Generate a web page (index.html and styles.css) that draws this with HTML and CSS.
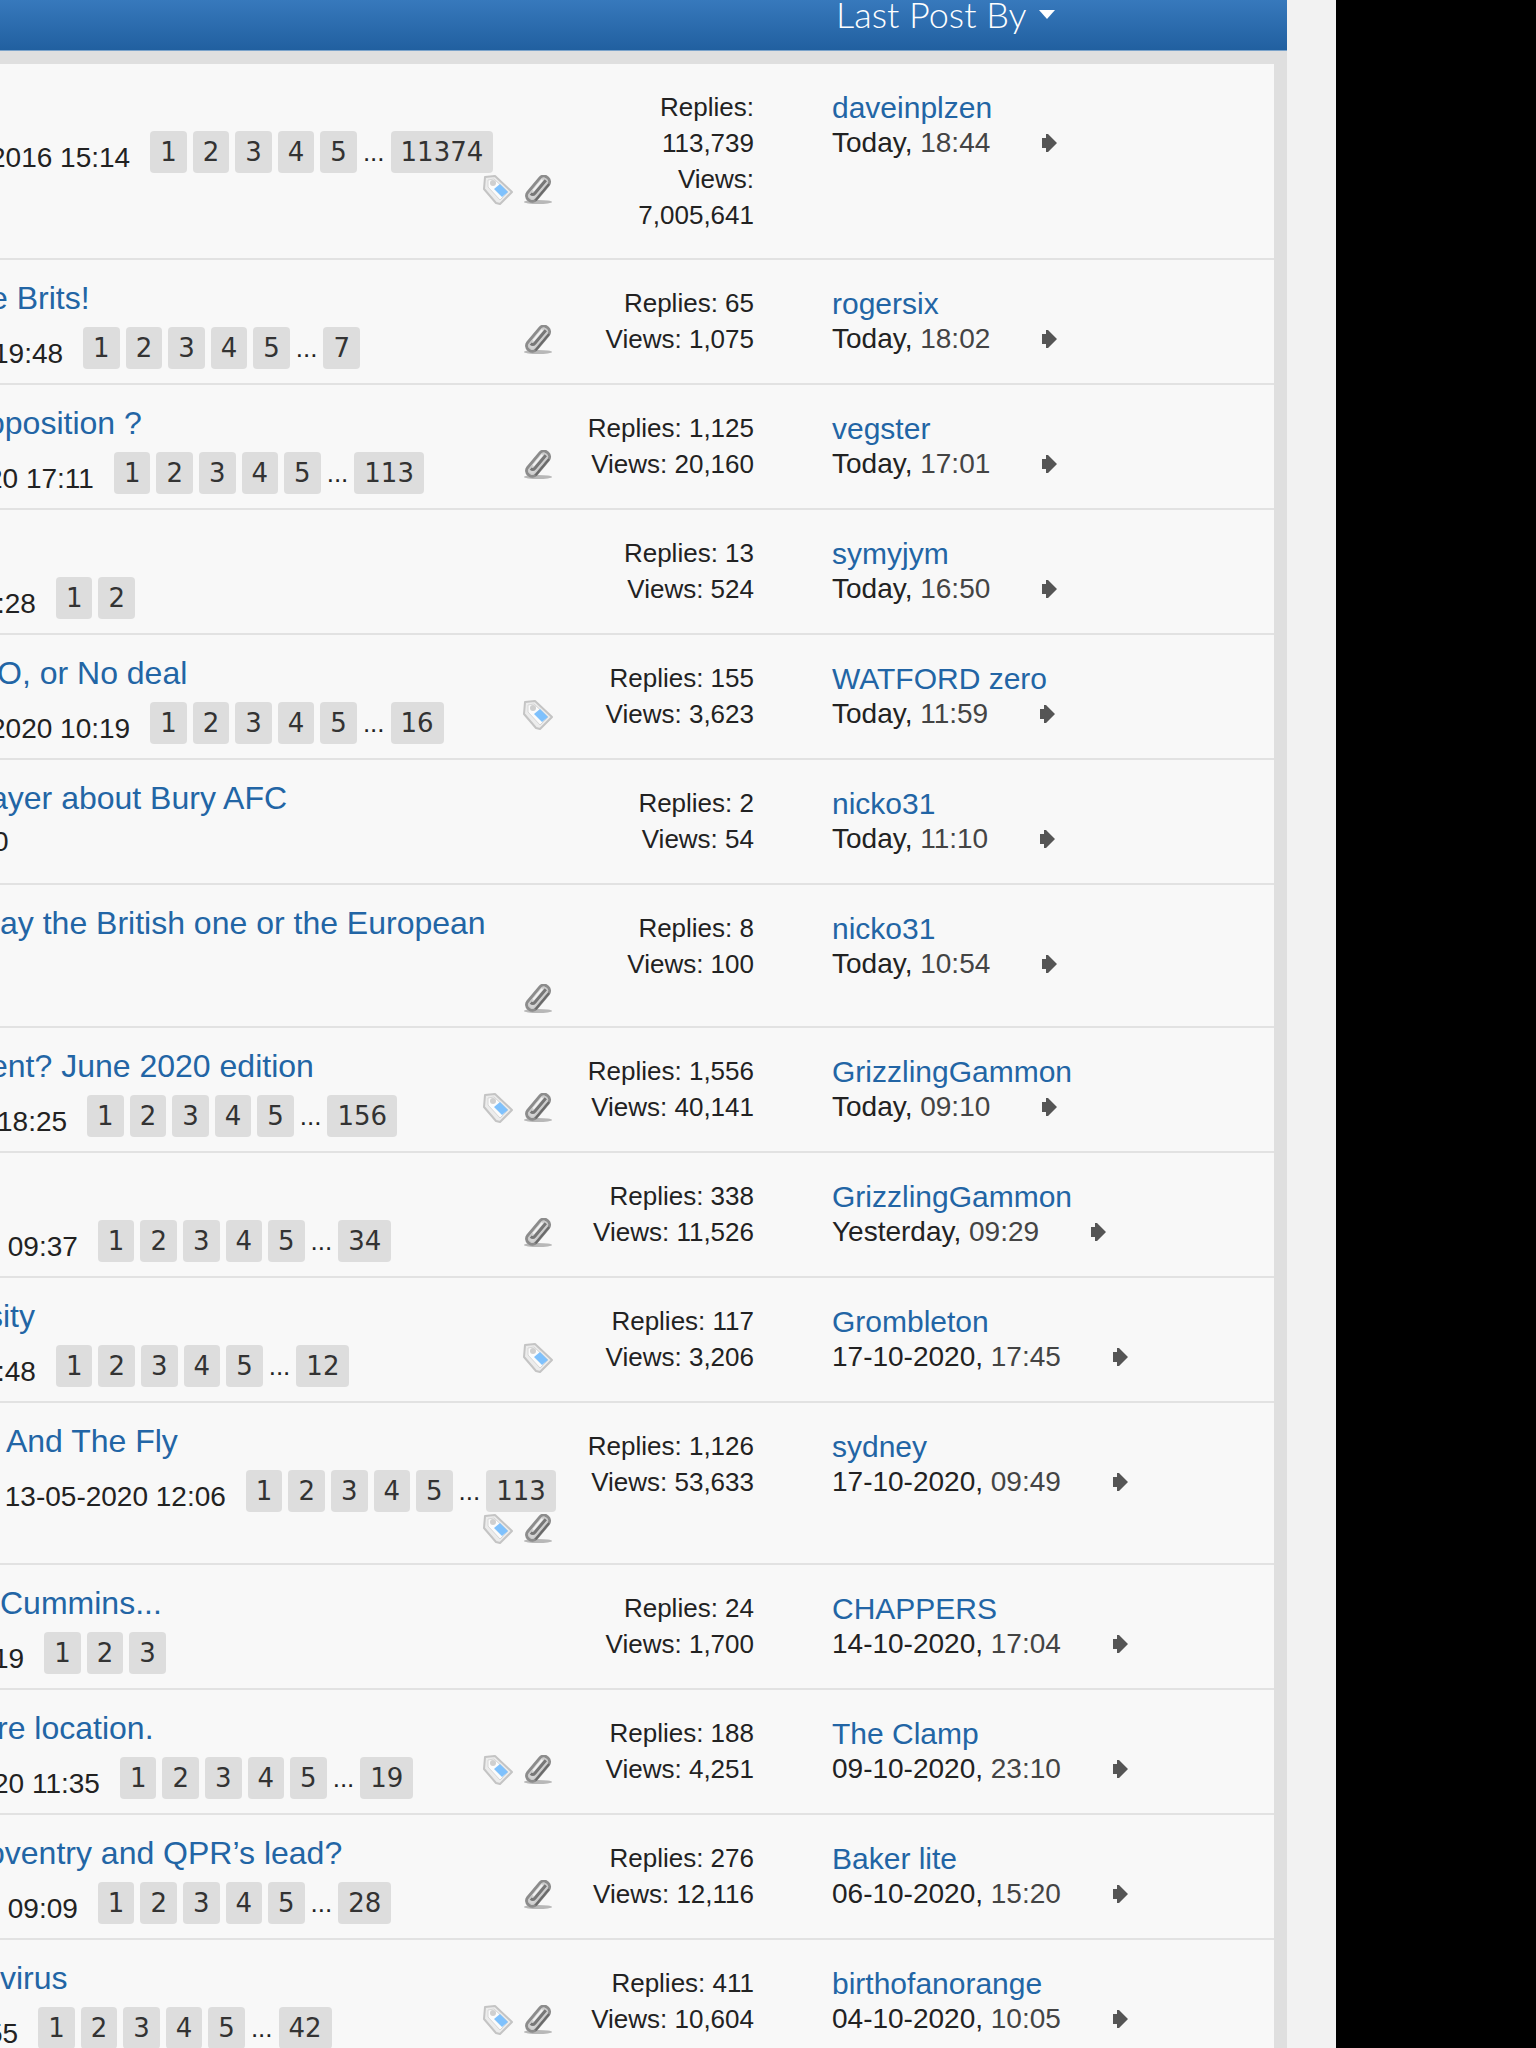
FILE: index.html
```
<!DOCTYPE html>
<html lang="en">
<head>
    <meta charset="UTF-8">
    <meta name="viewport" content="width=device-width, initial-scale=1.0">
    <title>Forum threads</title>
    <link rel="stylesheet" href="styles.css">
</head>
<body>
    <svg class="sprite" aria-hidden="true">
        <symbol id="icon-tag" viewBox="0 0 32 30">
            <path d="M4 2 L14 1 L31 17 L19 29 L15 28 L3 14 Z" fill="#ececec" stroke="#c4c4c4" stroke-width="2" stroke-linejoin="round"/>
            <path d="M7 5 L13 4 L27 17 L19 25 L7 12 Z" fill="#fbfbfb" stroke="#d6d6d6" stroke-width="1"/>
            <circle cx="12" cy="8" r="3" fill="#cfcfcf"/>
            <path d="M19 9 L27 17 L21 22 L13 14 Z" fill="#7fc1fc"/>
        </symbol>
        <symbol id="icon-clip" viewBox="0 0 32 30">
            <ellipse cx="17" cy="27" rx="14" ry="2" fill="#b8b8b8"/>
            <g transform="rotate(-50 17 13)" fill="none">
                <rect x="2" y="8" width="29" height="11" rx="5" fill="#d4d4d4" stroke="#8c8c8c" stroke-width="3"/>
                <rect x="4" y="10" width="25" height="7" rx="3" stroke="#c9c9c9" stroke-width="1"/>
                <path d="M28 14 H11 Q8 14 8 11" stroke="#777" stroke-width="3"/>
                <path d="M26 11 H12" stroke="#f2f2f2" stroke-width="2"/>
                <path d="M6 19 H27" stroke="#6a6a6a" stroke-width="2"/>
            </g>
        </symbol>
        <symbol id="icon-go" viewBox="0 0 16 20">
            <path d="M1 5 H5 V1 H7 L16 10 L7 19 H5 V15 H1 Z" fill="#555"/>
        </symbol>
    </svg>

    <div class="site">
        <div class="forum">
            <div class="thread-head">
                <a class="sort" href="#">Last Post By <span class="caret"></span></a>
            </div>
            <ol class="threads">
                <li class="thread">
                    <div class="info">
                        <h3 class="title">&nbsp;</h3>
                        <div class="meta-row">
                            <div class="meta cut-l"><span class="date">2016 15:14</span>
                                <span class="pages"><a href="#">1</a><a href="#">2</a><a href="#">3</a><a href="#">4</a><a href="#">5</a><span>...</span><a href="#">11374</a></span>
                            </div>
                            <div class="icons"><svg><use href="#icon-tag"/></svg><svg><use href="#icon-clip"/></svg></div>
                        </div>
                    </div>
                    <ul class="stats"><li>Replies: 113,739</li><li>Views: 7,005,641</li></ul>
                    <div class="last"><a class="user" href="#">daveinplzen</a><p>Today, <span>18:44</span><a class="go" href="#" aria-label="Go to last post"><svg><use href="#icon-go"/></svg></a></p></div>
                </li>
                <li class="thread">
                    <div class="info">
                        <h3 class="title cut-l"><a href="#">e Brits!</a></h3>
                        <div class="meta-row">
                            <div class="meta cut-m"><span class="date">19:48</span>
                                <span class="pages"><a href="#">1</a><a href="#">2</a><a href="#">3</a><a href="#">4</a><a href="#">5</a><span>...</span><a href="#">7</a></span>
                            </div>
                            <div class="icons"><svg><use href="#icon-clip"/></svg></div>
                        </div>
                    </div>
                    <ul class="stats"><li>Replies: 65</li><li>Views: 1,075</li></ul>
                    <div class="last"><a class="user" href="#">rogersix</a><p>Today, <span>18:02</span><a class="go" href="#" aria-label="Go to last post"><svg><use href="#icon-go"/></svg></a></p></div>
                </li>
                <li class="thread">
                    <div class="info">
                        <h3 class="title cut-xl"><a href="#">oposition ?</a></h3>
                        <div class="meta-row">
                            <div class="meta cut-xl"><span class="date">20 17:11</span>
                                <span class="pages"><a href="#">1</a><a href="#">2</a><a href="#">3</a><a href="#">4</a><a href="#">5</a><span>...</span><a href="#">113</a></span>
                            </div>
                            <div class="icons"><svg><use href="#icon-clip"/></svg></div>
                        </div>
                    </div>
                    <ul class="stats"><li>Replies: 1,125</li><li>Views: 20,160</li></ul>
                    <div class="last"><a class="user" href="#">vegster</a><p>Today, <span>17:01</span><a class="go" href="#" aria-label="Go to last post"><svg><use href="#icon-go"/></svg></a></p></div>
                </li>
                <li class="thread">
                    <div class="info">
                        <h3 class="title">&nbsp;</h3>
                        <div class="meta-row">
                            <div class="meta cut-s"><span class="date">:28</span>
                                <span class="pages"><a href="#">1</a><a href="#">2</a></span>
                            </div>
                        </div>
                    </div>
                    <ul class="stats"><li>Replies: 13</li><li>Views: 524</li></ul>
                    <div class="last"><a class="user" href="#">symyjym</a><p>Today, <span>16:50</span><a class="go" href="#" aria-label="Go to last post"><svg><use href="#icon-go"/></svg></a></p></div>
                </li>
                <li class="thread">
                    <div class="info">
                        <h3 class="title cut-s"><a href="#">O, or No deal</a></h3>
                        <div class="meta-row">
                            <div class="meta cut-l"><span class="date">2020 10:19</span>
                                <span class="pages"><a href="#">1</a><a href="#">2</a><a href="#">3</a><a href="#">4</a><a href="#">5</a><span>...</span><a href="#">16</a></span>
                            </div>
                            <div class="icons"><svg><use href="#icon-tag"/></svg></div>
                        </div>
                    </div>
                    <ul class="stats"><li>Replies: 155</li><li>Views: 3,623</li></ul>
                    <div class="last"><a class="user" href="#">WATFORD zero</a><p>Today, <span>11:59</span><a class="go" href="#" aria-label="Go to last post"><svg><use href="#icon-go"/></svg></a></p></div>
                </li>
                <li class="thread">
                    <div class="info">
                        <h3 class="title cut-l"><a href="#">ayer about Bury AFC</a></h3>
                        <div class="meta-row">
                            <div class="meta cut-m"><span class="date">0</span></div>
                        </div>
                    </div>
                    <ul class="stats"><li>Replies: 2</li><li>Views: 54</li></ul>
                    <div class="last"><a class="user" href="#">nicko31</a><p>Today, <span>11:10</span><a class="go" href="#" aria-label="Go to last post"><svg><use href="#icon-go"/></svg></a></p></div>
                </li>
                <li class="thread">
                    <div class="info">
                        <h3 class="title"><a href="#">ay the British one or the European<br>&nbsp;</a></h3>
                        <div class="meta-row">
                            <div class="icons"><svg><use href="#icon-clip"/></svg></div>
                        </div>
                    </div>
                    <ul class="stats"><li>Replies: 8</li><li>Views: 100</li></ul>
                    <div class="last"><a class="user" href="#">nicko31</a><p>Today, <span>10:54</span><a class="go" href="#" aria-label="Go to last post"><svg><use href="#icon-go"/></svg></a></p></div>
                </li>
                <li class="thread">
                    <div class="info">
                        <h3 class="title cut-l"><a href="#">ent? June 2020 edition</a></h3>
                        <div class="meta-row">
                            <div class="meta cut-s"><span class="date">18:25</span>
                                <span class="pages"><a href="#">1</a><a href="#">2</a><a href="#">3</a><a href="#">4</a><a href="#">5</a><span>...</span><a href="#">156</a></span>
                            </div>
                            <div class="icons"><svg><use href="#icon-tag"/></svg><svg><use href="#icon-clip"/></svg></div>
                        </div>
                    </div>
                    <ul class="stats"><li>Replies: 1,556</li><li>Views: 40,141</li></ul>
                    <div class="last"><a class="user" href="#">GrizzlingGammon</a><p>Today, <span>09:10</span><a class="go" href="#" aria-label="Go to last post"><svg><use href="#icon-go"/></svg></a></p></div>
                </li>
                <li class="thread">
                    <div class="info">
                        <h3 class="title">&nbsp;</h3>
                        <div class="meta-row">
                            <div class="meta"><span class="date">&nbsp;09:37</span>
                                <span class="pages"><a href="#">1</a><a href="#">2</a><a href="#">3</a><a href="#">4</a><a href="#">5</a><span>...</span><a href="#">34</a></span>
                            </div>
                            <div class="icons"><svg><use href="#icon-clip"/></svg></div>
                        </div>
                    </div>
                    <ul class="stats"><li>Replies: 338</li><li>Views: 11,526</li></ul>
                    <div class="last"><a class="user" href="#">GrizzlingGammon</a><p>Yesterday, <span>09:29</span><a class="go" href="#" aria-label="Go to last post"><svg><use href="#icon-go"/></svg></a></p></div>
                </li>
                <li class="thread">
                    <div class="info">
                        <h3 class="title cut-xl"><a href="#">sity</a></h3>
                        <div class="meta-row">
                            <div class="meta cut-s"><span class="date">:48</span>
                                <span class="pages"><a href="#">1</a><a href="#">2</a><a href="#">3</a><a href="#">4</a><a href="#">5</a><span>...</span><a href="#">12</a></span>
                            </div>
                            <div class="icons"><svg><use href="#icon-tag"/></svg></div>
                        </div>
                    </div>
                    <ul class="stats"><li>Replies: 117</li><li>Views: 3,206</li></ul>
                    <div class="last"><a class="user" href="#">Grombleton</a><p>17-10-2020, <span>17:45</span><a class="go" href="#" aria-label="Go to last post"><svg><use href="#icon-go"/></svg></a></p></div>
                </li>
                <li class="thread thread-long">
                    <div class="info">
                        <h3 class="title cut-s"><a href="#">&nbsp;And The Fly</a></h3>
                        <div class="meta-row">
                            <div class="meta cut-s"><span class="date">&nbsp;13-05-2020 12:06</span>
                                <span class="pages"><a href="#">1</a><a href="#">2</a><a href="#">3</a><a href="#">4</a><a href="#">5</a><span>...</span><a href="#">113</a></span>
                            </div>
                            <div class="icons"><svg><use href="#icon-tag"/></svg><svg><use href="#icon-clip"/></svg></div>
                        </div>
                    </div>
                    <ul class="stats"><li>Replies: 1,126</li><li>Views: 53,633</li></ul>
                    <div class="last"><a class="user" href="#">sydney</a><p>17-10-2020, <span>09:49</span><a class="go" href="#" aria-label="Go to last post"><svg><use href="#icon-go"/></svg></a></p></div>
                </li>
                <li class="thread">
                    <div class="info">
                        <h3 class="title"><a href="#">Cummins...</a></h3>
                        <div class="meta-row">
                            <div class="meta cut-m"><span class="date">19</span>
                                <span class="pages"><a href="#">1</a><a href="#">2</a><a href="#">3</a></span>
                            </div>
                        </div>
                    </div>
                    <ul class="stats"><li>Replies: 24</li><li>Views: 1,700</li></ul>
                    <div class="last"><a class="user" href="#">CHAPPERS</a><p>14-10-2020, <span>17:04</span><a class="go" href="#" aria-label="Go to last post"><svg><use href="#icon-go"/></svg></a></p></div>
                </li>
                <li class="thread">
                    <div class="info">
                        <h3 class="title cut-s"><a href="#">re location.</a></h3>
                        <div class="meta-row">
                            <div class="meta cut-m"><span class="date">20 11:35</span>
                                <span class="pages"><a href="#">1</a><a href="#">2</a><a href="#">3</a><a href="#">4</a><a href="#">5</a><span>...</span><a href="#">19</a></span>
                            </div>
                            <div class="icons"><svg><use href="#icon-tag"/></svg><svg><use href="#icon-clip"/></svg></div>
                        </div>
                    </div>
                    <ul class="stats"><li>Replies: 188</li><li>Views: 4,251</li></ul>
                    <div class="last"><a class="user" href="#">The Clamp</a><p>09-10-2020, <span>23:10</span><a class="go" href="#" aria-label="Go to last post"><svg><use href="#icon-go"/></svg></a></p></div>
                </li>
                <li class="thread">
                    <div class="info">
                        <h3 class="title cut-xl"><a href="#">oventry and QPR’s lead?</a></h3>
                        <div class="meta-row">
                            <div class="meta"><span class="date">&nbsp;09:09</span>
                                <span class="pages"><a href="#">1</a><a href="#">2</a><a href="#">3</a><a href="#">4</a><a href="#">5</a><span>...</span><a href="#">28</a></span>
                            </div>
                            <div class="icons"><svg><use href="#icon-clip"/></svg></div>
                        </div>
                    </div>
                    <ul class="stats"><li>Replies: 276</li><li>Views: 12,116</li></ul>
                    <div class="last"><a class="user" href="#">Baker lite</a><p>06-10-2020, <span>15:20</span><a class="go" href="#" aria-label="Go to last post"><svg><use href="#icon-go"/></svg></a></p></div>
                </li>
                <li class="thread">
                    <div class="info">
                        <h3 class="title"><a href="#">virus</a></h3>
                        <div class="meta-row">
                            <div class="meta cut-xl"><span class="date">55</span>
                                <span class="pages"><a href="#">1</a><a href="#">2</a><a href="#">3</a><a href="#">4</a><a href="#">5</a><span>...</span><a href="#">42</a></span>
                            </div>
                            <div class="icons"><svg><use href="#icon-tag"/></svg><svg><use href="#icon-clip"/></svg></div>
                        </div>
                    </div>
                    <ul class="stats"><li>Replies: 411</li><li>Views: 10,604</li></ul>
                    <div class="last"><a class="user" href="#">birthofanorange</a><p>04-10-2020, <span>10:05</span><a class="go" href="#" aria-label="Go to last post"><svg><use href="#icon-go"/></svg></a></p></div>
                </li>
            </ol>
        </div>
    </div>
</body>
</html>
```
FILE: styles.css
```
* {
    box-sizing: border-box;
}
body {
    margin: 0;
    background: #000;
    color: #222;
    font-family: "Liberation Sans", Arial, sans-serif;
    font-size: 28px;
}
a {
    color: #2265a5;
    text-decoration: none;
}
.sprite {
    display: none;
}
.site {
    height: 100vh;
    overflow: hidden;
    margin-right: 200px;
    padding-right: 49px;
    background: #f2f2f2;
}
.forum {
    background: #dfdfdf;
}

/* column header */
.thread-head {
    display: flex;
    justify-content: flex-end;
    height: 51px;
    padding-right: 13px;
    background: linear-gradient(#3779bc, #2160a0);
    border-bottom: 1px solid #7ba3ca;
}
.sort {
    display: flex;
    align-items: center;
    gap: 12px;
    width: 438px;
    height: 28px;
    color: #fff;
    font-family: Lato, sans-serif;
    font-size: 36px;
    font-weight: 300;
    line-height: 28px;
}
.caret {
    border: 8px solid transparent;
    border-top: 9px solid #fff;
    border-bottom: 0;
}

/* thread rows */
.threads {
    list-style: none;
    margin: 0;
    padding: 13px 13px 0 0;
}
.thread {
    display: grid;
    grid-template-columns: minmax(0, 1fr) 190px 520px;
    min-height: 125px;
    background: #f8f8f8;
    border-bottom: 2px solid #e2e2e2;
}
.info {
    padding: 21px 11px 12px 0;
}
.thread-long .info {
    padding-bottom: 19px;
}
.title {
    margin: 0 0 12px;
    font-size: 32px;
    font-weight: normal;
    line-height: 34px;
    white-space: nowrap;
}
.meta-row {
    display: flex;
    flex-wrap: wrap;
    align-items: flex-start;
    row-gap: 4px;
}
.meta {
    display: flex;
    align-items: flex-end;
    gap: 20px;
    flex-shrink: 0;
}
.date {
    line-height: 30px;
    white-space: nowrap;
}
/* text that runs off the left edge */
.cut-s {
    margin-left: -3px;
}
.cut-m {
    margin-left: -7px;
}
.cut-l {
    margin-left: -10px;
}
.cut-xl {
    margin-left: -13px;
}
.pages {
    display: flex;
    gap: 6px;
    font-size: 26px;
    line-height: 42px;
}
.pages a {
    padding: 0 10px;
    border-radius: 4px;
    background: #ddd;
    color: #333;
    font-family: "DejaVu Sans", Verdana, sans-serif;
}
.icons {
    display: flex;
    gap: 8px;
    margin: -2px 0 0 auto;
}
.icons svg {
    width: 32px;
    height: 30px;
}
.stats {
    list-style: none;
    margin: 0;
    padding: 25px 0;
    font-size: 26px;
    line-height: 36px;
    text-align: right;
}
.last {
    padding-top: 26px;
    margin-left: 78px;
}
.user {
    display: block;
    font-size: 30px;
    line-height: 36px;
}
.last p {
    display: flex;
    align-items: center;
    margin: 0;
    line-height: 34px;
    white-space: pre;
}
.last span {
    color: #444;
}
.go {
    display: flex;
    margin-left: 51px;
}
.go svg {
    width: 16px;
    height: 20px;
}
```
